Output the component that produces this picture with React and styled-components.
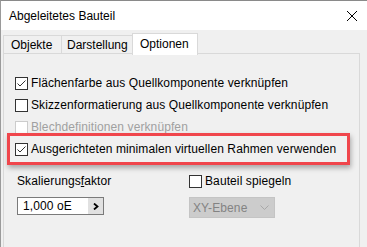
import React from "react";
import styled, { createGlobalStyle } from "styled-components";

const Global = createGlobalStyle`
  html, body { margin: 0; padding: 0; }
  body {
    background: #f0f0f0;
    font-family: "Liberation Sans", Arial, sans-serif;
    font-size: 12px;
    color: #000;
  }
`;

const Window = styled.div`
  width: 367px;
  height: 247px;
  box-sizing: border-box;
  overflow: hidden;
  border-top: 1px solid #8a8a8a;
  border-left: 1px solid #9a9a9a;
  background: #f0f0f0;
`;

const TitleBar = styled.div`
  height: 29px;
  background: #fff;
  display: flex;
  align-items: center;
  justify-content: space-between;
  padding: 0 10px 0 8px;
`;

const Title = styled.span`
  font-size: 12px;
  line-height: 14px;
  padding-top: 1px;
`;

const CloseIcon = styled.svg`
  width: 10px;
  height: 10px;
  display: block;
`;

const Body = styled.div`
  padding: 3px 0 0 2px;
`;

const TabStrip = styled.div`
  display: flex;
  align-items: flex-end;
  height: 20px;
  position: relative;
  z-index: 1;
`;

const Tab = styled.div`
  box-sizing: border-box;
  width: ${(p) => p.$w}px;
  height: ${(p) => (p.$active ? 22 : 18)}px;
  margin-bottom: ${(p) => (p.$active ? -2 : 0)}px;
  margin-left: ${(p) => (p.$first ? 0 : -1)}px;
  border: 1px solid #d9d9d9;
  border-bottom: none;
  background: ${(p) => (p.$active ? "#fff" : "#f0f0f0")};
  padding-left: ${(p) => p.$pad}px;
  padding-top: ${(p) => (p.$active ? 3 : 2)}px;
  line-height: 14px;
  white-space: nowrap;
`;

const Panel = styled.div`
  width: 357px;
  height: 200px;
  box-sizing: border-box;
  border: 1px solid #d9d9d9;
  background: #f0f0f0;
  padding: 18px 11px 0 11px;
  display: flex;
  flex-direction: column;
  letter-spacing: 0.1px;
`;

const Row = styled.label`
  height: 22px;
  display: flex;
  align-items: center;
  gap: 3px;
  color: ${(p) => (p.$disabled ? "#a0a0a0" : "#000")};
  white-space: nowrap;
`;

const Highlight = styled.div`
  box-sizing: border-box;
  width: 343px;
  height: 32px;
  margin: -5px 0 -5px -8px;
  padding-left: 5px;
  border: 3px solid #f0464c;
  box-shadow: 1px 3px 5px rgba(0, 0, 0, 0.3);
  display: flex;
  align-items: center;
`;

const Box = styled.span`
  box-sizing: border-box;
  width: 13px;
  height: 13px;
  flex: none;
  border: 1px solid ${(p) => (p.$disabled ? "#cccccc" : "#333")};
  background: #fff;
  display: flex;
  align-items: center;
  justify-content: center;
`;

const Lower = styled.div`
  display: grid;
  grid-template-columns: 174px auto;
  margin-top: 10px;
  row-gap: 5px;
`;

const FieldLabel = styled.div`
  height: 22px;
  display: flex;
  align-items: center;
  padding-left: 2px;
  white-space: nowrap;
`;

const Spin = styled.div`
  margin-left: 2px;
  width: 87px;
  height: 18px;
  box-sizing: border-box;
  border: 1px solid #7a7a7a;
  background: #fff;
  display: flex;
`;

const SpinText = styled.span`
  flex: 1;
  padding-left: 5px;
  line-height: 16px;
`;

const SpinButton = styled.span`
  width: 15px;
  background: #e1e1e1;
  display: flex;
  align-items: center;
  justify-content: center;
`;

const Combo = styled.div`
  width: 86px;
  height: 21px;
  box-sizing: border-box;
  background: #cccccc;
  border: 1px solid #c4c4c4;
  color: #838383;
  display: flex;
  align-items: center;
  justify-content: space-between;
  padding: 0 5px 0 3px;
`;

const Check = () => (
  <svg width="11" height="11" viewBox="0 0 11 11">
    <path d="M1.5 5.5 L4 8 L9.5 2.5" fill="none" stroke="#333" strokeWidth="1" />
  </svg>
);

const CheckBox = ({ checked, disabled }) => (
  <Box $disabled={disabled}>{checked && <Check />}</Box>
);

export default function App() {
  return (
    <>
      <Global />
      <Window>
        <TitleBar>
          <Title>Abgeleitetes Bauteil</Title>
          <CloseIcon viewBox="0 0 10 10">
            <path d="M0 0 L10 10 M10 0 L0 10" stroke="#000" strokeWidth="1" />
          </CloseIcon>
        </TitleBar>
        <Body>
          <TabStrip>
            <Tab $first $w={59} $pad={7}>Objekte</Tab>
            <Tab $w={72} $pad={5}>Darstellung</Tab>
            <Tab $active $w={66} $pad={7}>Optionen</Tab>
          </TabStrip>
          <Panel>
            <Row>
              <CheckBox checked />
              Flächenfarbe aus Quellkomponente verknüpfen
            </Row>
            <Row>
              <CheckBox />
              Skizzenformatierung aus Quellkomponente verknüpfen
            </Row>
            <Row $disabled>
              <CheckBox disabled />
              Blechdefinitionen verknüpfen
            </Row>
            <Highlight>
              <Row>
                <CheckBox checked />
                Ausgerichteten minimalen virtuellen Rahmen verwenden
              </Row>
            </Highlight>
            <Lower>
              <FieldLabel>
                Skalierungs<u>f</u>aktor
              </FieldLabel>
              <Row>
                <CheckBox />
                Bauteil spiegeln
              </Row>
              <Spin>
                <SpinText>1,000 oE</SpinText>
                <SpinButton>
                  <svg width="6" height="7" viewBox="0 0 6 7">
                    <path d="M1 0.5 L4.5 3.5 L1 6.5" fill="none" stroke="#000" strokeWidth="1.8" />
                  </svg>
                </SpinButton>
              </Spin>
              <Combo>
                <span>XY-Ebene</span>
                <svg width="9" height="5" viewBox="0 0 9 5">
                  <path d="M0.5 0.5 L4.5 4.5 L8.5 0.5" fill="none" stroke="#a8a8a8" strokeWidth="1" />
                </svg>
              </Combo>
            </Lower>
          </Panel>
        </Body>
      </Window>
    </>
  );
}
